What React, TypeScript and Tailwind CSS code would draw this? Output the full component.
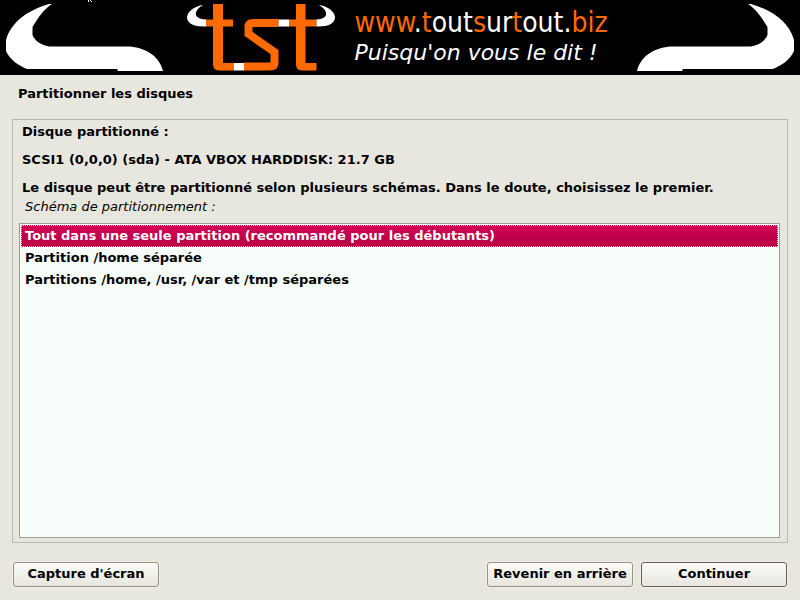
import { useState } from "react";

const schemes = [
  "Tout dans une seule partition (recommandé pour les débutants)",
  "Partition /home séparée",
  "Partitions /home, /usr, /var et /tmp séparées",
];

function Horn({ className = "" }: { className?: string }) {
  return (
    <svg viewBox="0 0 157 75" className={`h-[75px] w-[157px] shrink-0 ${className}`} aria-hidden="true">
      <path
        fill="#fff"
        d="M46 4 C38 9 32 18 26.500 27 V35 C29 41 35 45 43 46.500 H124 C142 48 154 58 157 71 H111.500 V69 H21 C12 65 4 60 0 51 V40 C5 22 22 10 43 4 Z"
      />
    </svg>
  );
}

function Logo() {
  return (
    <svg viewBox="187 0 148 75" className="h-[75px] w-[148px] shrink-0" role="img" aria-label="tst">
      <g fill="none" stroke="#ff6a00" strokeWidth="7">
        <path d="M206 23 H233" />
        <path d="M289 23 H316.500" />
        <path d="M278.500 23 H253 Q248.500 23 248.500 27 V34 L274.500 52 V63 Q274.500 66.500 270 66.500 H244" strokeWidth="8" />
      </g>
      <path fill="#ff6a00" d="M213 4 H223 V63 H234 V70.500 H219 Q213 70.500 213 64 Z" />
      <path fill="#ff6a00" d="M296 4 H305.500 V63 H316.500 V70.500 H302 Q296 70.500 296 64 Z" />
      <path fill="#fff" d="M234 63 H244 V70.500 H234 Z M278.500 19.500 H289 V26.500 H278.500 Z" />
      <path fill="#fff" d="M203 5 C193 11 193 19 206 19.500 V26.500 C191 27 187 22 187 17 C188 10 196 6 203 5 Z" />
      <path fill="#fff" d="M319 5 C329 11 329 19 316.500 19.500 V26.500 C331 27 335 22 335 17 C334 10 326 6 319 5 Z" />
    </svg>
  );
}

function Button({ children, primary = false }: { children: string; primary?: boolean }) {
  return (
    <button
      type="button"
      className={`h-[25px] w-[146px] rounded-[3px] border bg-linear-to-b from-[#fdfbf9] via-[#f0f1eb] to-[#e9e4de] pb-[2px] font-bold whitespace-nowrap shadow-[0_0_0_1px_#f0efea] ${
        primary ? "border-[#6c5c54]" : "border-[#9c8f7c]"
      }`}
    >
      {children}
    </button>
  );
}

export default function App() {
  const [selected, setSelected] = useState(0);
  return (
    <div className="flex min-h-screen flex-col bg-[#e8e7df] font-['DejaVu_Sans',sans-serif] text-[13px] leading-[18px] text-black">
      <header className="relative flex h-[75px] items-center justify-between overflow-hidden bg-black px-[6px]">
        <Horn />
        <div className="flex items-center gap-5">
          <Logo />
          <div className="w-[259px] pb-1 whitespace-nowrap">
            <p className="font-['DejaVu_Sans_Condensed','DejaVu_Sans',sans-serif] text-[28px] leading-[34px] text-white">
              <span className="text-[#ff6a00]">www</span>.<span className="text-[#ff6a00]">t</span>out
              <span className="text-[#ff6a00]">s</span>ur<span className="text-[#ff6a00]">t</span>out.
              <span className="text-[#ff6a00]">biz</span>
            </p>
            <p className="text-[22px] leading-[26px] text-white italic">Puisqu'on vous le dit !</p>
          </div>
        </div>
        <Horn className="-scale-x-100" />
        <svg viewBox="0 0 5 2" className="absolute top-0 left-[88px] h-[2px] w-[5px]" aria-hidden="true">
          <path fill="#fff" d="M0 0H1V2H0Z M2 0H3V1H2Z M3 1H4V2H3Z" />
        </svg>
      </header>

      <main className="flex flex-1 flex-col px-3 pb-[13px]">
        <h1 className="px-[6px] pt-[10px] pb-4 font-bold">Partitionner les disques</h1>
        <section className="flex flex-1 flex-col border border-[#bdb8a8] pt-[3px] pr-[7px] pb-1 pl-[6px]">
          <div className="flex flex-col gap-[10px] px-[3px] font-bold">
            <p>Disque partitionné :</p>
            <p>SCSI1 (0,0,0) (sda) - ATA VBOX HARDDISK: 21.7 GB</p>
            <p>Le disque peut être partitionné selon plusieurs schémas. Dans le doute, choisissez le premier.</p>
          </div>
          <p id="scheme-label" className="px-[6px] pt-px pb-[7px] italic">
            Schéma de partitionnement :
          </p>
          <div
            role="radiogroup"
            aria-labelledby="scheme-label"
            className="flex-1 border border-[#a49e91] bg-[#f7fdf8] p-px"
          >
            {schemes.map((scheme, i) => (
              <label
                key={scheme}
                className="flex h-[22px] items-center border border-dotted border-transparent px-[3px] font-bold has-checked:border-[#f5c3d5] has-checked:bg-linear-to-b has-checked:from-[#d20056] has-checked:to-[#b50043] has-checked:text-white"
              >
                <input
                  type="radio"
                  name="scheme"
                  className="size-0 appearance-none"
                  checked={selected === i}
                  onChange={() => setSelected(i)}
                />
                {scheme}
              </label>
            ))}
          </div>
        </section>
        <footer className="flex gap-2 px-px pt-[19px]">
          <Button>Capture d'écran</Button>
          <div className="flex-1" />
          <Button>Revenir en arrière</Button>
          <Button primary>Continuer</Button>
        </footer>
      </main>
    </div>
  );
}
